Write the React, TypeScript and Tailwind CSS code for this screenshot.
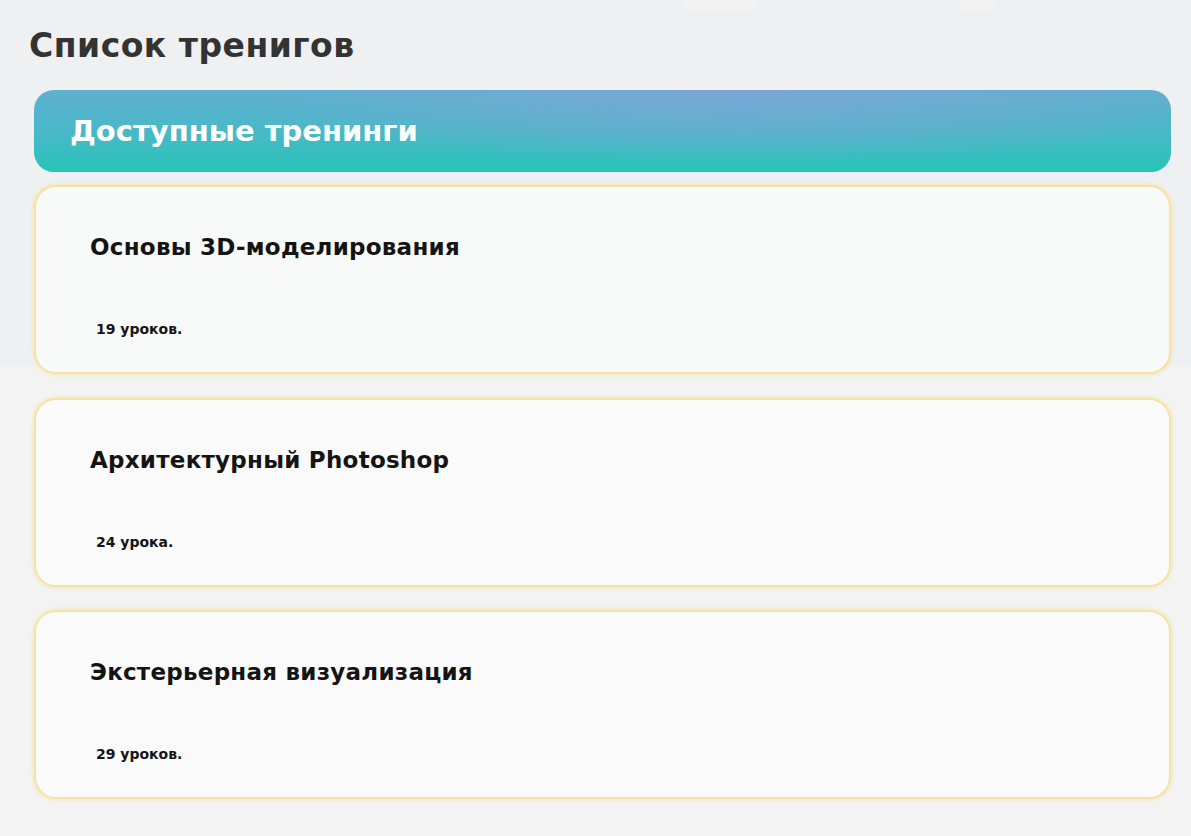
import React from "react";

const trainings = [
  { title: "Основы 3D-моделирования", count: "19 уроков.", bg: "bg-[#f8f9f9]" },
  { title: "Архитектурный Photoshop", count: "24 урока.", bg: "bg-[#fafafa]" },
  { title: "Экстерьерная визуализация", count: "29 уроков.", bg: "bg-[#fafafa]" },
];

export default function App() {
  return (
    <div
      className="relative min-h-screen w-full bg-[linear-gradient(to_bottom,#eff0f2_0px,#eff0f2_366px,#f3f3f3_366px,#f3f3f3_100%)] pb-[36px]"
      style={{ fontFamily: '"DejaVu Sans", "Noto Sans", sans-serif' }}
    >
      <div className="pointer-events-none absolute left-[684px] top-0 h-[11px] w-[72px] bg-[#f2f2f2]" />
      <div className="pointer-events-none absolute left-[958px] top-0 h-[11px] w-[37px] bg-[#f2f2f2]" />

      <h1 className="pl-[29px] pt-[26px] text-[33px] font-bold leading-[40px] tracking-[0.5px] text-[#333333]">
        Список тренигов
      </h1>

      <div className="flex flex-col pl-[34px] pr-[20px] pt-[24px]">
        <div className="flex h-[82px] items-center rounded-[20px] bg-[radial-gradient(ellipse_45%_90%_at_62%_0%,rgba(124,166,214,0.9),rgba(124,166,214,0)_100%),linear-gradient(to_bottom,#5fb0cf_0%,#4ab8c8_50%,#27c4b7_100%)] pl-[36px]">
          <h2 className="text-[29px] font-bold leading-[36px] text-white">Доступные тренинги</h2>
        </div>

        <div className="mt-[13px] flex flex-col gap-[23.5px]">
          {trainings.map((t) => (
            <div
              key={t.title}
              className={`flex h-[189px] shrink-0 flex-col rounded-[22px] border-2 border-[#f5e3a3] ${t.bg} pl-[54px] pt-[45px] shadow-[0_0_4px_rgba(245,220,130,0.8)]`}
            >
              <div className="text-[23px] font-semibold leading-[30px] tracking-[0.25px] text-[#141414]">
                {t.title}
              </div>
              <div className="mt-[57px] pl-[6px] text-[14px] font-bold leading-[20px] text-[#141414]">
                {t.count}
              </div>
            </div>
          ))}
        </div>
      </div>
    </div>
  );
}
